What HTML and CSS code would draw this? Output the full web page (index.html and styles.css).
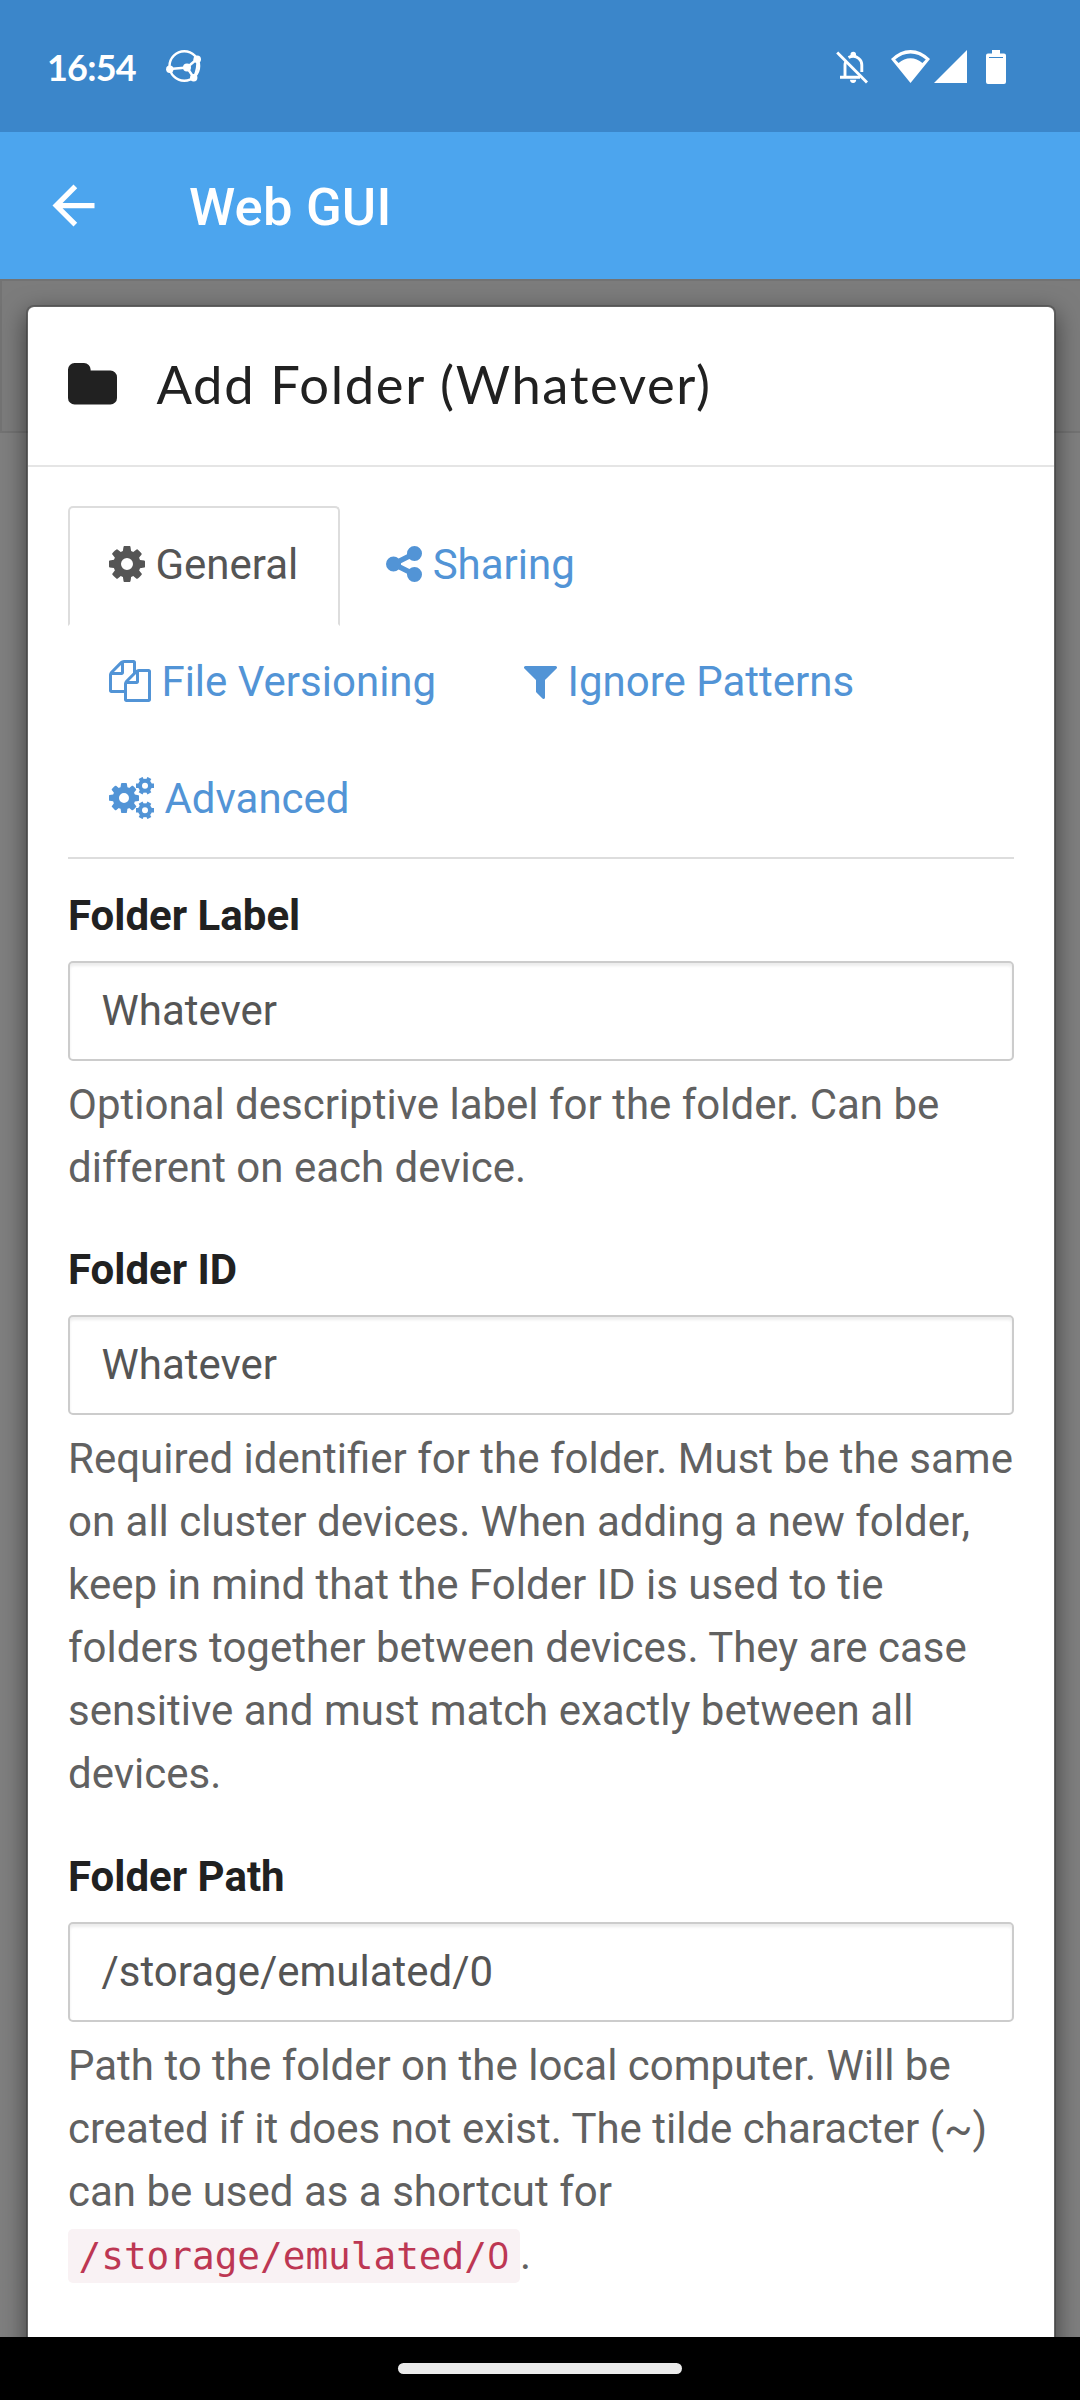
FILE: index.html
```html
<!DOCTYPE html>
<html lang="en">
<head>
<meta charset="utf-8">
<title>Web GUI</title>
<link rel="stylesheet" href="styles.css">
</head>
<body>
<header class="status">
  <span class="clock">16:54</span>
  <svg class="sync" viewBox="0 0 36 34" width="36" height="34"><g fill="none" stroke="#fff" stroke-width="2.4"><circle cx="18.3" cy="17" r="14.8"/><path d="M4 20l17-1.500 10-8.500M21 18.500l7 10.500M31 10q1.500 9-3 18.500" /></g><g fill="#fff"><circle cx="3.800" cy="20.300" r="3.700"/><circle cx="31.200" cy="10.300" r="3.800"/><circle cx="27.700" cy="28.700" r="3.700"/><circle cx="21" cy="18.500" r="4"/></g></svg>
  <span class="spacer"></span>
  <svg class="bell" viewBox="0 0 32 33" width="32" height="33"><g fill="none" stroke="#fff" stroke-width="2.900"><path d="M1.200 1.500l29.800 30"/><path d="M4 26.200h20M9 26V14q0-2 1-3.500M12.500 6.500q6-3 10.300 1 3 2.500 3 6.500v7"/></g><path fill="#fff" d="M14.500 5.500v-2a2.500 2.500 0 0 1 5.500 0v2zM14 28.800h6.200a3.100 3.100 0 0 1-6.200 0z"/></svg>
  <svg class="wifi" viewBox="0 0 39 33" width="39" height="33"><path fill="#fff" fill-rule="evenodd" d="M19.500 33L0 9Q9 0 19.500 0T39 9zM4.200 9.600L7.600 13Q13 8.300 19.500 8.300T31.400 13L34.800 9.600Q28 3.500 19.500 3.500T4.200 9.600z"/></svg>
  <svg class="signal" viewBox="0 0 33 33" width="33" height="33"><path fill="#fff" d="M33 0v33H0z"/></svg>
  <svg class="battery" viewBox="0 0 20 34" width="20" height="34"><path fill="#fff" d="M6 0h8v3.500h4q2 0 2 2V32q0 2-2 2H2q-2 0-2-2V5.500q0-2 2-2h4z"/><path stroke="#3b86ca" stroke-width="1" d="M3 7.500h14"/></svg>
</header>
<nav class="toolbar">
  <svg class="back" viewBox="0 0 24 24" width="63" height="63"><path fill="#fff" d="M20 11H7.830l5.590-5.590L12 4l-8 8 8 8 1.410-1.410L7.830 13H20v-2z"/></svg>
  <h1 class="app-title">Web GUI</h1>
</nav>
<main class="page">
  <div class="backdrop"><div class="navbar"></div></div>
  <section class="modal">
    <div class="modal-header">
      <svg class="folder" viewBox="64 128 1664 1408" width="49" height="41.500"><path fill="currentColor" d="M1728 608v704q0 92-66 158t-158 66h-1216q-92 0-158-66t-66-158v-960q0-92 66-158t158-66h320q92 0 158 66t66 158v32h672q92 0 158 66t66 158z"/></svg>
      <h2 class="modal-title">Add Folder (Whatever)</h2>
    </div>
    <div class="modal-body">
      <div class="tabs">
        <a class="tab active"><svg class="fa" viewBox="128 0 1536 1792" width="36" height="42"><path id="cog" fill="currentColor" d="M1152 896q0-106-75-181t-181-75-181 75-75 181 75 181 181 75 181-75 75-181zm512-109v222q0 12-8 23t-20 13l-185 28q-19 54-39 91 35 50 107 138 10 12 10 25t-9 23q-27 37-99 108t-94 71q-12 0-26-9l-138-108q-44 23-91 38-16 136-29 186-7 28-36 28h-222q-14 0-24.500-8.500t-11.500-21.500l-28-184q-49-16-90-37l-141 107q-10 9-25 9-14 0-25-11-126-114-165-168-7-10-7-23 0-12 8-23 15-21 51-66.500t54-70.500q-27-50-41-99l-183-27q-13-2-21-12.500t-8-23.500v-222q0-12 8-23t19-13l186-28q14-46 39-92-40-57-107-138-10-12-10-24 0-10 9-23 26-36 98.500-107.500t94.500-71.500q13 0 26 10l138 107q44-23 91-38 16-136 29-186 7-28 36-28h222q14 0 24.500 8.500t11.500 21.500l28 184q49 16 90 37l142-107q9-9 24-9 13 0 25 10 129 119 165 170 7 8 7 22 0 12-8 23-15 21-51 66.500t-54 70.500q26 50 41 98l183 28q13 2 21 12.500t8 23.500z"/></svg> General</a>
        <a class="tab"><svg class="fa" viewBox="128 0 1536 1792" width="36" height="42"><path fill="currentColor" d="M1344 1024q133 0 226.500 93.500t93.500 226.500-93.500 226.500-226.500 93.500-226.500-93.500-93.500-226.500q0-12 2-34l-360-180q-92 86-218 86-133 0-226.500-93.500t-93.500-226.500 93.500-226.500 226.500-93.500q126 0 218 86l360-180q-2-22-2-34 0-133 93.500-226.500t226.500-93.500 226.500 93.500 93.500 226.500-93.500 226.500-226.500 93.500q-126 0-218-86l-360 180q2 22 2 34t-2 34l360 180q92-86 218-86z"/></svg> Sharing</a>
        <a class="tab"><svg class="fa" viewBox="0 0 1792 1792" width="42" height="42"><path fill="currentColor" d="M1696 384q40 0 68 28t28 68v1216q0 40-28 68t-68 28h-960q-40 0-68-28t-28-68v-288h-544q-40 0-68-28t-28-68v-672q0-40 20-88t48-76l408-408q28-28 76-48t88-20h416q40 0 68 28t28 68v328q68-40 128-40h416zm-544 213l-299 299h299v-299zm-640-384l-299 299h299v-299zm196 647l316-316v-416h-384v416q0 40-28 68t-68 28h-416v640h512v-256q0-40 20-88t48-76zm956 804v-1152h-384v416q0 40-28 68t-68 28h-416v640h896z"/></svg> File Versioning</a>
        <a class="tab"><svg class="fa" viewBox="192 0 1408 1792" width="33" height="42"><path fill="currentColor" d="M1595 295q17 41-14 70l-493 493v742q0 42-39 59-13 5-25 5-27 0-45-19l-256-256q-19-19-19-45v-486l-493-493q-31-29-14-70 17-39 59-39h1280q42 0 59 39z"/></svg> Ignore Patterns</a>
        <a class="tab"><svg class="fa" viewBox="0 0 45 42" width="45" height="42"><g transform="translate(-2.500 3.500) scale(.01953)"><use href="#cog"/></g><g id="small-cog" fill="none" stroke="currentColor"><circle cx="36" cy="8.700" r="5" stroke-width="4"/><path stroke-width="4.400" d="M41.500 8.700h3.500M38.700 13.400l1.700 3M33.300 13.400l-1.700 3M30.500 8.700h-3.500M33.300 4l-1.700-3M38.700 4l1.700-3"/></g><use href="#small-cog" y="24.600"/></svg> Advanced</a>
      </div>
      <div class="group">
        <label class="label">Folder Label</label>
        <div class="input">Whatever</div>
        <p class="help">Optional descriptive label for the folder. Can be different on each device.</p>
      </div>
      <div class="group">
        <label class="label">Folder ID</label>
        <div class="input">Whatever</div>
        <p class="help">Required identifier for the folder. Must be the same on all cluster devices. When adding a new folder, keep in mind that the Folder ID is used to tie folders together between devices. They are case sensitive and must match exactly between all devices.</p>
      </div>
      <div class="group">
        <label class="label">Folder Path</label>
        <div class="input">/storage/emulated/0</div>
        <p class="help">Path to the folder on the local computer. Will be created if it does not exist. The tilde character (~) can be used as a shortcut for <code class="code">/storage/emulated/<span class="zero">0</span></code>.</p>
      </div>
    </div>
  </section>
</main>
<footer class="gesture"><div class="pill"></div></footer>
</body>
</html>
```
FILE: styles.css
```css
* { box-sizing: border-box; }
body {
  margin: 0;
  height: 2400px;
  display: flex;
  flex-direction: column;
  overflow: hidden;
  font: 42px/63px Roboto, sans-serif;
  color: #212121;
  background: #fff;
}
svg { flex: none; }
.status {
  height: 132px;
  flex: none;
  display: flex;
  align-items: center;
  padding: 2px 74px 0 47px;
  background: #3b86ca;
}
.clock { width: 119px; margin-top: -1px; font: 700 36px/44px Lato, sans-serif; letter-spacing: -.8px; color: #fff; white-space: nowrap; }
.spacer { flex: 1; }
.wifi { margin-left: 23px; }
.signal { margin-left: 4px; }
.battery { margin-left: 19px; }
.sync, .wifi, .signal { margin-top: -2px; }
.toolbar {
  height: 147px;
  flex: none;
  display: flex;
  align-items: center;
  gap: 84px;
  padding-left: 42px;
  background: #4ca5ee;
}
.app-title { margin: 4px 0 0; font-size: 52.500px; font-weight: 500; letter-spacing: .2px; color: #fff; }
.page { flex: 1; min-height: 0; display: grid; grid-template: minmax(0, 1fr) / minmax(0, 1fr); overflow: hidden; }
.backdrop, .modal { grid-area: 1 / 1; }
.backdrop { background: #7f7f7f; }
.navbar { height: 154px; background: #7c7c7c; border: 2px solid #737373; border-right: 0; }
.modal {
  margin: 26px 24px -40px 26px;
  z-index: 1;
  border: 2px solid rgba(0, 0, 0, .2);
  border-radius: 8px;
  background: #fff;
  background-clip: padding-box;
  box-shadow: 0 8px 24px rgba(0, 0, 0, .5);
}
.modal-header {
  height: 160px;
  display: flex;
  align-items: center;
  gap: 40px;
  padding: 0 39.500px;
  border-bottom: 2px solid #e5e5e5;
}
.folder { margin-top: -4px; }
.modal-title { margin: -4px 0 0; font: 400 52.500px/58px Lato, sans-serif; letter-spacing: 1.650px; }
.modal-body { padding: 39px 40px; }
.tabs { display: flex; flex-wrap: wrap; column-gap: 5px; border-bottom: 2px solid #ddd; }
.tab {
  height: 120px;
  margin-bottom: -3px;
  padding: 24.500px 40px 24.500px 39px;
  border: 2px solid transparent;
  border-radius: 5px 5px 0 0;
  color: #5294d6;
  white-space: nowrap;
}
.tab.active { color: #555; border-color: #ddd; border-bottom-color: transparent; }
.fa { vertical-align: -6px; }
.group { margin-bottom: 39.400px; }
.tabs + .group { margin-top: 25px; }
.label { display: block; font-weight: 700; margin-bottom: 14px; }
.input {
  height: 100px;
  padding: 16px 31.500px;
  border: 2px solid #ccc;
  border-radius: 5px;
  color: #555;
  box-shadow: inset 0 3px 3px rgba(0, 0, 0, .075);
}
.help { margin: 12px 0 0; color: #616161; }
.code {
  display: inline-block;
  height: 54px;
  padding: 0 10.500px;
  border-radius: 5px;
  background: #f9f2f4;
  color: #bd3753;
  font: 37.700px/54px "DejaVu Sans Mono", monospace;
}
.zero { display: inline-block; width: 22.700px; text-align: center; font-family: "Noto Sans", sans-serif; line-height: 50px; }
.gesture { height: 63px; flex: none; display: flex; justify-content: center; padding-top: 26px; background: #000; }
.pill { width: 284px; height: 11px; border-radius: 6px; background: #ebebeb; }
```
